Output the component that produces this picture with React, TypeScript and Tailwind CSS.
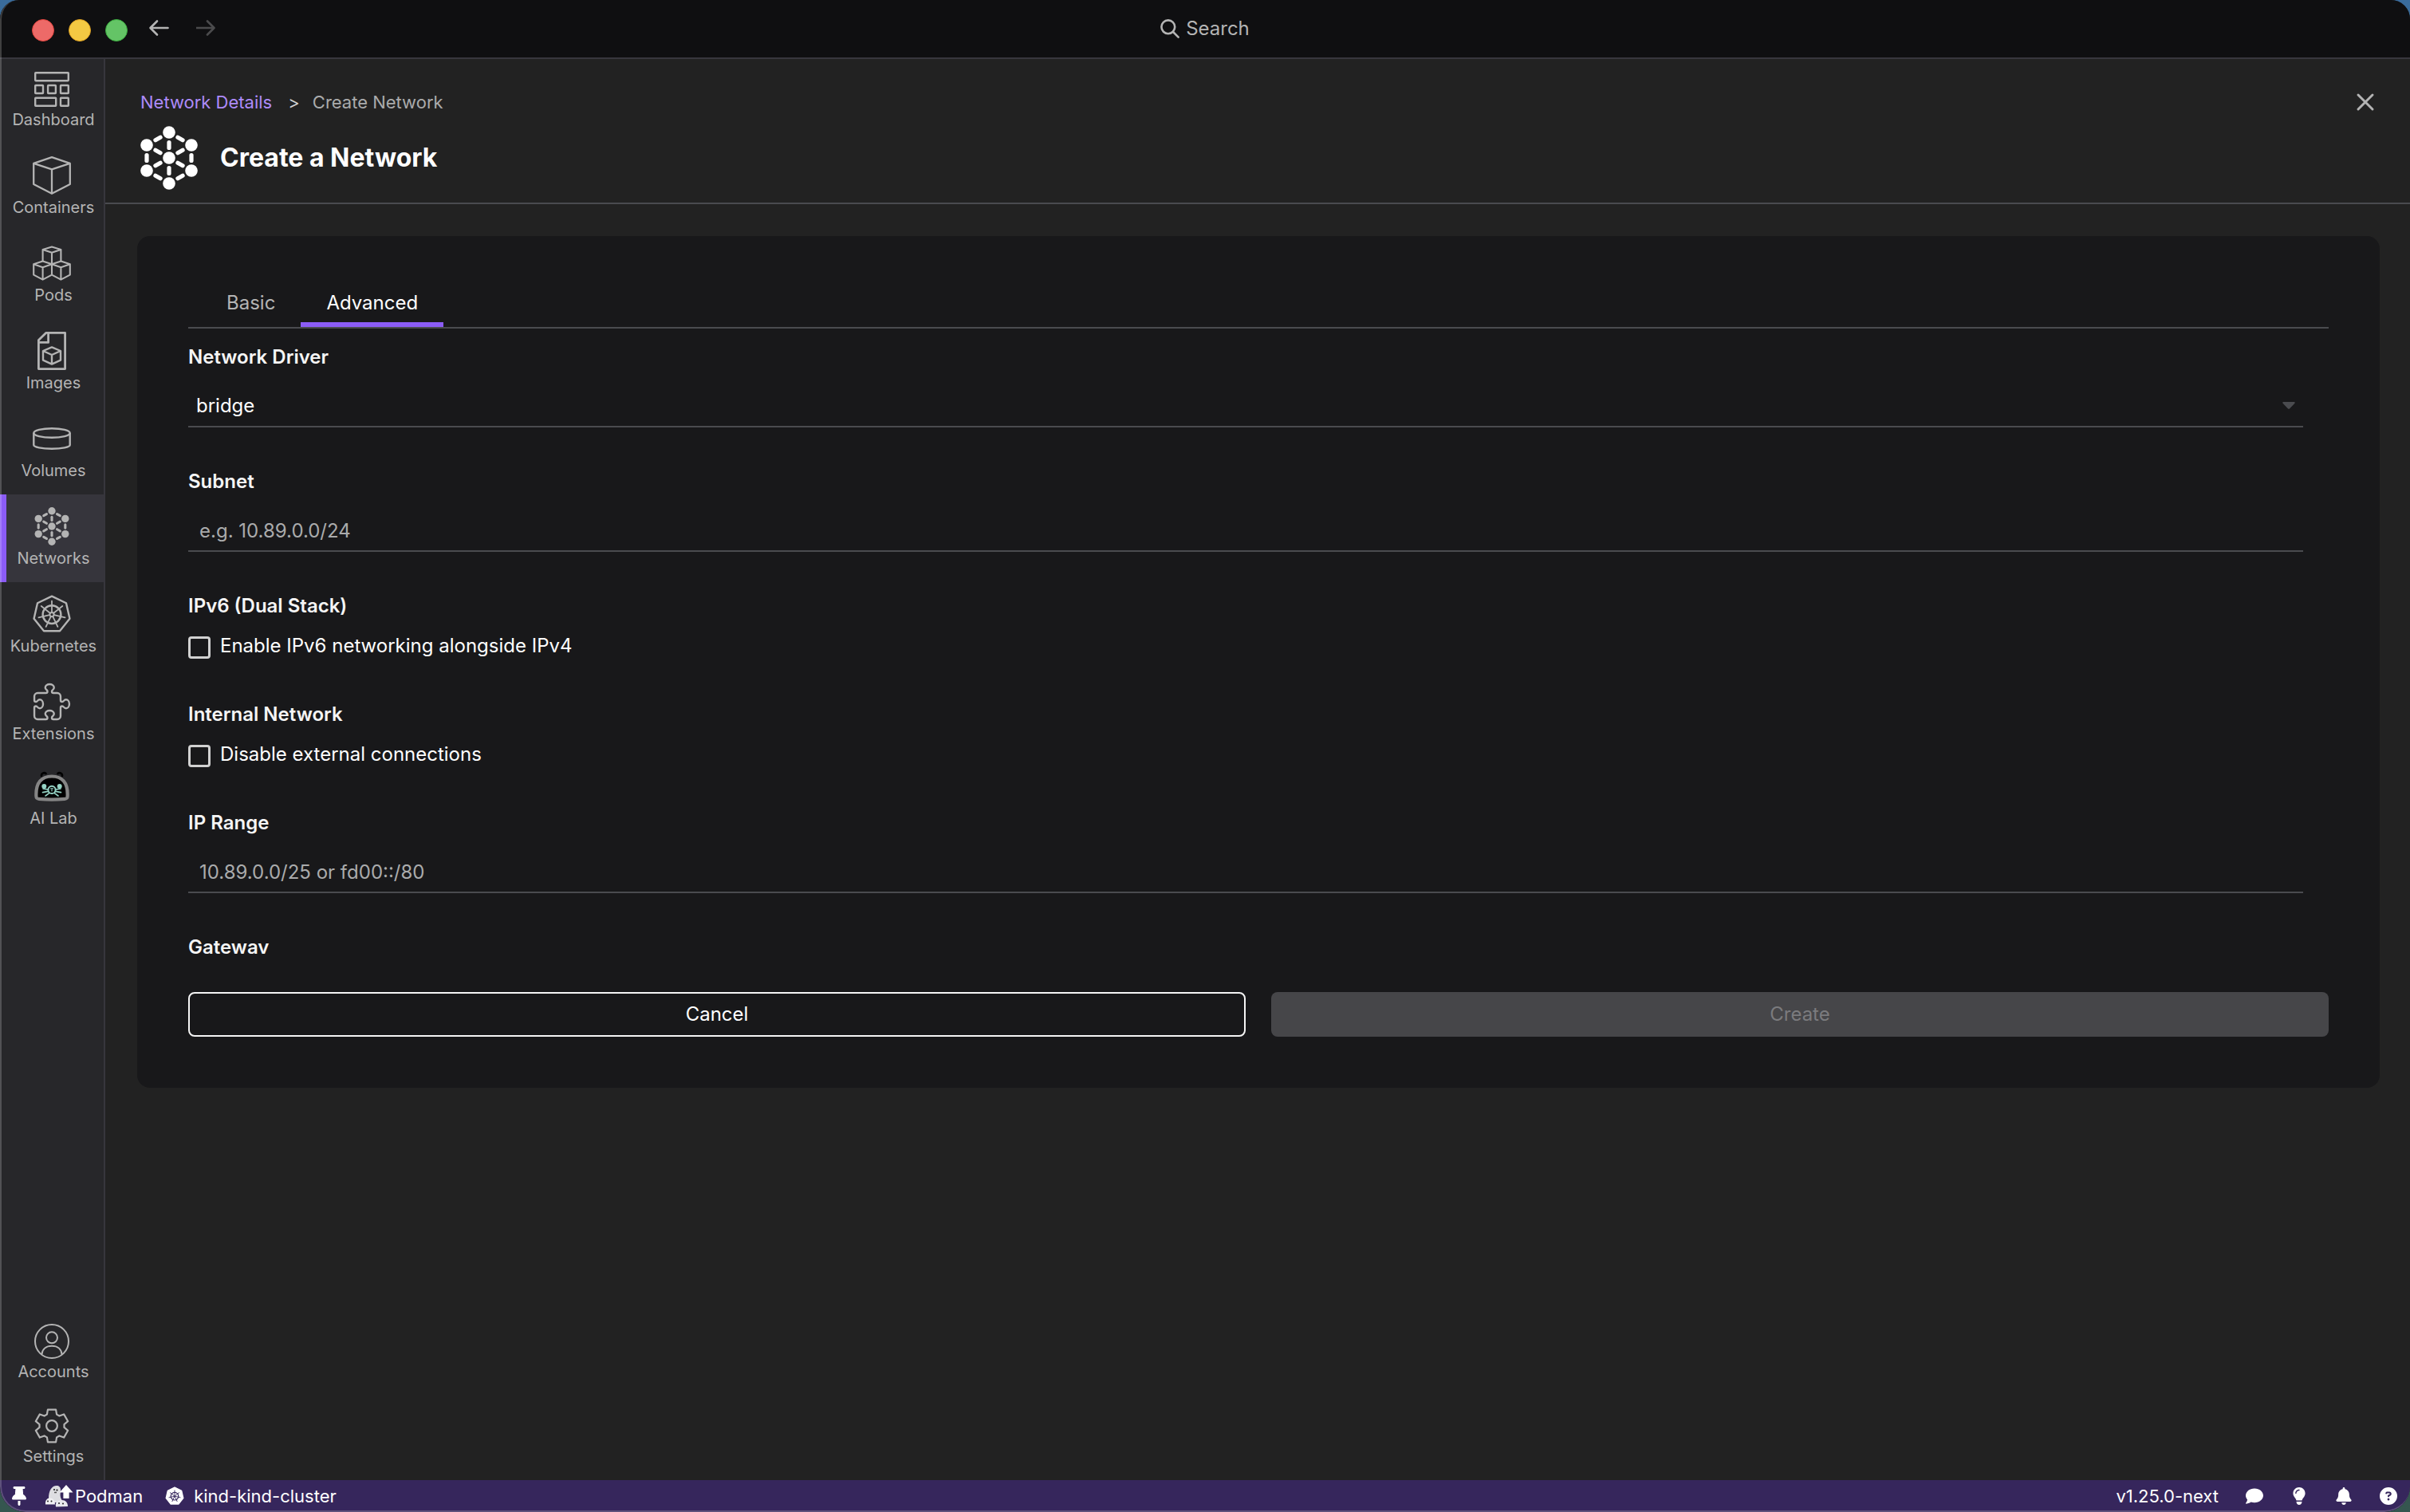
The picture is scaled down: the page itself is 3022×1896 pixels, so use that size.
import type { ReactNode } from "react";
import { FaBell, FaCircleQuestion, FaComment, FaLightbulb, FaThumbtack } from "react-icons/fa6";

type IconProps = {
  className?: string;
};

const polar = (cx: number, cy: number, r: number, deg: number) => {
  const a = (deg * Math.PI) / 180;
  return [cx + r * Math.sin(a), cy - r * Math.cos(a)];
};

const ring = (cx: number, cy: number, r: number, count: number) =>
  Array.from({ length: count }, (_, i) => polar(cx, cy, r, (360 / count) * i));

const NODES = [
  [40, 8],
  [68, 24],
  [68, 56],
  [40, 72],
  [12, 56],
  [12, 24],
];

const NetworkIcon = ({ className = "" }: IconProps) => {
  const edges = NODES.flatMap((node, i) => [
    [node, NODES[(i + 1) % 6]],
    [node, [40, 40]],
  ]);
  return (
    <svg className={className} viewBox="0 0 80 80" fill="currentColor" aria-hidden="true">
      {edges.map(([a, b], i) => (
        <line
          key={i}
          x1={a[0] + (b[0] - a[0]) * 0.39}
          y1={a[1] + (b[1] - a[1]) * 0.39}
          x2={a[0] + (b[0] - a[0]) * 0.61}
          y2={a[1] + (b[1] - a[1]) * 0.61}
          stroke="currentColor"
          strokeWidth="5.2"
          strokeLinecap="round"
        />
      ))}
      {[...NODES, [40, 40]].map(([x, y]) => (
        <circle key={`${x}-${y}`} cx={x} cy={y} r="7.8" />
      ))}
    </svg>
  );
};

const DashboardIcon = ({ className = "" }: IconProps) => (
  <svg className={className} viewBox="0 0 44 44" fill="none" stroke="currentColor" strokeWidth="2.4" aria-hidden="true">
    <rect x="1.2" y="1.2" width="41.6" height="10" rx="0.6" />
    <rect x="1.2" y="17" width="9.8" height="10" rx="0.6" />
    <rect x="17.1" y="17" width="9.8" height="10" rx="0.6" />
    <rect x="33" y="17" width="9.8" height="10" rx="0.6" />
    <rect x="1.2" y="32.8" width="26" height="10" rx="0.6" />
    <rect x="33" y="32.8" width="9.8" height="10" rx="0.6" />
  </svg>
);

const ContainerIcon = ({ className = "" }: IconProps) => (
  <svg className={className} viewBox="0 0 48 48" fill="none" stroke="currentColor" strokeWidth="2.3" strokeLinejoin="round" aria-hidden="true">
    <path d="M24 1.2 46.8 8.8V35L24 46.8 1.2 35V8.8Z" />
    <path d="M1.2 8.8 24 16.4 46.8 8.8M24 16.4V46.8" />
  </svg>
);

const PodIcon = ({ className = "" }: IconProps) => (
  <svg className={className} viewBox="0 0 48 48" fill="none" stroke="currentColor" strokeWidth="2.1" strokeLinejoin="round" aria-hidden="true">
    <path d="M12.6 21V7L24 3.6 35.4 7V21M12.6 7 24 10.8 35.4 7M24 10.8V38.6" />
    <path d="M24 25.2 12.6 21.4 1.2 25.2V38.6L12.6 44.6 24 38.6M1.2 25.2 12.6 29.2 24 25.2M12.6 29.2V44.6" />
    <path d="M24 25.2 35.4 21.4 46.8 25.2V38.6L35.4 44.6 24 38.6M46.8 25.2 35.4 29.2 24 25.2M35.4 29.2V44.6" />
  </svg>
);

const ImageIcon = ({ className = "" }: IconProps) => (
  <svg className={className} viewBox="0 0 48 48" fill="none" stroke="currentColor" strokeWidth="2.8" strokeLinejoin="round" aria-hidden="true">
    <path d="M16.6 1.4H40.6V46.6H7.4V10.6Z" />
    <path d="M19.6 1.4V13.4H7.4" />
    <path strokeWidth="2.4" d="M24 19.4 35 24V35.6L24 40.6 13 35.6V24ZM13 24 24 29 35 24M24 29V40.6" />
  </svg>
);

const VolumeIcon = ({ className = "" }: IconProps) => (
  <svg className={className} viewBox="0 0 48 48" fill="none" stroke="currentColor" strokeWidth="2.4" aria-hidden="true">
    <ellipse cx="24" cy="17" rx="22.7" ry="5.8" />
    <path d="M1.3 17V32C1.3 34.6 11.4 36.8 24 36.8S46.7 34.6 46.7 32V17" />
  </svg>
);

const KubernetesIcon = ({ className = "" }: IconProps) => (
  <svg className={className} viewBox="0 0 48 48" fill="none" stroke="currentColor" aria-hidden="true">
    <polygon
      points={ring(24, 24.6, 23, 7).map((p) => p.join(",")).join(" ")}
      strokeWidth="2.4"
      strokeLinejoin="round"
    />
    <circle cx="24" cy="24.6" r="11.4" strokeWidth="2.4" />
    <circle cx="24" cy="24.6" r="2.6" strokeWidth="2" />
    {ring(24, 24.6, 17, 7).map(([x, y], i) => (
      <line key={i} x1={24 + (x - 24) * 0.17} y1={24.6 + (y - 24.6) * 0.17} x2={x} y2={y} strokeWidth="1.8" strokeLinecap="round" />
    ))}
  </svg>
);

const ExtensionIcon = ({ className = "" }: IconProps) => (
  <svg className={className} viewBox="-24 -24 560 560" fill="none" stroke="currentColor" strokeWidth="28" aria-hidden="true">
    <path d="M192 104.8c0-9.2-5.8-17.3-13.2-22.8C167.2 73.3 160 61.3 160 48c0-26.5 28.7-48 64-48s64 21.5 64 48c0 13.3-7.2 25.3-18.8 34c-7.4 5.5-13.2 13.6-13.2 22.8c0 12.8 10.4 23.2 23.2 23.2H336c26.5 0 48 21.5 48 48v56.8c0 12.8 10.4 23.2 23.2 23.2c9.2 0 17.3-5.8 22.8-13.2c8.7-11.6 20.7-18.8 34-18.8c26.5 0 48 28.7 48 64s-21.5 64-48 64c-13.3 0-25.3-7.2-34-18.8c-5.5-7.4-13.6-13.2-22.8-13.2c-12.8 0-23.2 10.4-23.2 23.2V464c0 26.5-21.5 48-48 48H279.2c-12.8 0-23.2-10.4-23.2-23.2c0-9.2 5.8-17.3 13.2-22.8c11.6-8.7 18.8-20.7 18.8-34c0-26.5-28.7-48-64-48s-64 21.5-64 48c0 13.3 7.2 25.3 18.8 34c7.4 5.5 13.2 13.6 13.2 22.8c0 12.8-10.4 23.2-23.2 23.2H48c-26.5 0-48-21.5-48-48V343.2C0 330.4 10.4 320 23.2 320c9.2 0 17.3 5.8 22.8 13.2C54.7 344.8 66.7 352 80 352c26.5 0 48-28.7 48-64s-21.5-64-48-64c-13.3 0-25.3 7.2-34 18.8C40.5 250.2 32.4 256 23.2 256C10.4 256 0 245.6 0 232.8V176c0-26.5 21.5-48 48-48H168.8c12.8 0 23.2-10.4 23.2-23.2Z" />
  </svg>
);

const AiLabIcon = ({ className = "" }: IconProps) => (
  <svg className={className} viewBox="0 0 44 44" fill="none" aria-hidden="true">
    <path d="M9 7a3.4 3.4 0 0 1 5.6-3M35 7a3.4 3.4 0 0 0-5.6-3" stroke="#000" strokeWidth="2.6" strokeLinecap="round" />
    <path d="M2.4 32.5C1.6 15 9.5 7.5 22 7.5S42.4 15 41.6 32.5C41.5 35.4 40 35.6 38 35.8 27 36.8 17 36.8 6 35.8 4 35.6 2.5 35.4 2.4 32.5Z" fill="#000" stroke="#858585" strokeWidth="4.2" />
    <g fill="#95d3c4">
      <circle cx="12.3" cy="20" r="3" />
      <circle cx="31.7" cy="20" r="3" />
    </g>
    <g stroke="#95d3c4" strokeWidth="1.6" strokeLinecap="round">
      <circle cx="22" cy="24.4" r="4.6" strokeWidth="2" />
      <path d="M17 24 11 23M17.4 26.4 10.5 27.6M18.6 28.6 14 32M27 24 33 23M26.6 26.4 33.5 27.6M25.4 28.6 30 32" />
      <path d="M20.6 22.8H23.4M22 24.4V26" strokeWidth="1.2" />
    </g>
  </svg>
);

const AccountIcon = ({ className = "" }: IconProps) => (
  <svg className={className} viewBox="0 0 44 44" fill="none" stroke="currentColor" strokeWidth="2" aria-hidden="true">
    <circle cx="22" cy="22" r="21" />
    <circle cx="22" cy="17.3" r="7" />
    <path d="M9.4 38.4C10 31.4 15 27.8 22 27.8S34 31.4 34.6 38.4" />
  </svg>
);

const SettingsIcon = ({ className = "" }: IconProps) => {
  const points = Array.from({ length: 6 }, (_, i) => i * 60).flatMap((a) => [
    polar(22, 22, 15.6, a - 23),
    polar(22, 22, 21, a - 14),
    polar(22, 22, 21, a + 14),
    polar(22, 22, 15.6, a + 23),
  ]);
  return (
    <svg className={className} viewBox="0 0 44 44" fill="none" stroke="currentColor" strokeWidth="2.2" strokeLinejoin="round" aria-hidden="true">
      <polygon points={points.map((p) => p.join(",")).join(" ")} />
      <circle cx="22" cy="22" r="6.9" />
    </svg>
  );
};

const PodmanIcon = ({ className = "" }: IconProps) => (
  <svg className={className} viewBox="0 0 36 30" aria-hidden="true">
    <path d="M5 18C5 8 9 2 15 2c3 0 5 2 5 5 0 4-1 6 0 10l3 6H9Z" fill="#dedee2" />
    <path d="M1 25.500c-.6-5 2-8 5.500-8S13 20 13 25.500Z" fill="#f0f0f2" />
    <path d="M14 28.500c-1-5 1.500-8.500 7-8.500s8 3.500 8 8Z" fill="#e8e8ec" />
    <circle cx="12" cy="7" r="1.1" fill="#222" />
    <circle cx="15.5" cy="7.6" r="1.1" fill="#222" />
    <path d="M12 10.5H15" stroke="#555" strokeWidth="1.4" />
    <circle cx="4" cy="21.5" r="1" fill="#222" />
    <circle cx="8.5" cy="21.5" r="1" fill="#222" />
    <circle cx="18" cy="24" r="1" fill="#222" />
    <circle cx="23" cy="24.5" r="1" fill="#222" />
    <path d="M27 1 35.5 10.5H30.6V18H23.4V10.5H18.5Z" fill="#fff" />
  </svg>
);

const ClusterIcon = ({ className = "" }: IconProps) => (
  <svg className={className} viewBox="0 0 24 24" fill="none" aria-hidden="true">
    <polygon points={ring(12, 12.2, 11, 7).map((p) => p.join(",")).join(" ")} fill="#fff" stroke="#fff" strokeWidth="1.5" strokeLinejoin="round" />
    <g stroke="#36265c" strokeWidth="1.2">
      <circle cx="12" cy="12.2" r="4.8" />
      {ring(12, 12.2, 7.6, 7).map(([x, y], i) => (
        <line key={i} x1="12" y1="12.2" x2={x} y2={y} strokeWidth="0.9" />
      ))}
    </g>
  </svg>
);

type NavItemProps = {
  label: string;
  icon: ReactNode;
  active?: boolean;
};

const NavItem = ({ label, icon, active = false }: NavItemProps) => (
  <a
    href="#"
    aria-current={active ? "page" : undefined}
    className={`flex flex-col items-center border-l-8 pt-4 pr-2 pb-4 text-[#b4b4b4] ${
      active ? "border-[#8b5cf6] bg-[#36353c]" : "border-transparent"
    }`}
  >
    {icon}
    <span className="pt-0.5 pl-1 text-xl leading-7">{label}</span>
  </a>
);

type FieldProps = {
  id: string;
  label: string;
  placeholder: string;
};

const TextField = ({ id, label, placeholder }: FieldProps) => (
  <div className="flex shrink-0 flex-col gap-3">
    <label htmlFor={id} className="text-2xl leading-10 font-semibold text-[#f5f5f5]">
      {label}
    </label>
    <input
      id={id}
      type="text"
      placeholder={placeholder}
      className="h-14 w-full border-b-2 border-[#4a4b4f] bg-transparent px-3.5 pt-1 text-2xl text-white placeholder:text-[#aaabac]"
    />
  </div>
);

const CheckField = ({ id, label, text }: { id: string; label: string; text: string }) => (
  <fieldset className="flex shrink-0 flex-col">
    <legend className="mb-3 text-2xl leading-10 font-semibold text-[#f5f5f5]">{label}</legend>
    <label htmlFor={id} className="flex items-start gap-3 text-2xl leading-9 text-white">
      <input
        id={id}
        type="checkbox"
        className="mt-1.5 size-7 appearance-none rounded border-3 border-[#d1d1d1]"
      />
      {text}
    </label>
  </fieldset>
);

const TitleBar = () => (
  <header className="grid h-[74px] shrink-0 grid-cols-[1fr_auto_1fr] items-center border-b-2 border-[#37363d] bg-[#0f0f11] text-[#b4b4b4]">
    <div className="flex items-center pl-10">
      <div className="flex gap-[18px] pt-1">
        <span className="size-7 rounded-full border border-[#e0443e] bg-[#ed6a68]" />
        <span className="size-7 rounded-full border border-[#dea123] bg-[#f4c943]" />
        <span className="size-7 rounded-full border border-[#3bab3f] bg-[#64c466]" />
      </div>
      <button type="button" aria-label="Back" className="ml-[26px] pb-0.5">
        <svg className="h-6 w-7" viewBox="0 0 28 24" fill="none" stroke="currentColor" strokeWidth="2.6" strokeLinecap="round" strokeLinejoin="round">
          <path d="M24.5 12H3M11 3.5 2.5 12l8.5 8.5" />
        </svg>
      </button>
      <button type="button" aria-label="Forward" className="ml-8 pb-0.5 text-[#4b4b4d]" disabled>
        <svg className="h-6 w-7" viewBox="0 0 28 24" fill="none" stroke="currentColor" strokeWidth="2.6" strokeLinecap="round" strokeLinejoin="round">
          <path d="M.5 12H22M14 3.5 22.5 12 14 20.5" />
        </svg>
      </button>
    </div>
    <button type="button" className="flex items-center gap-2 text-2xl leading-8">
      <svg className="size-6" viewBox="0 0 24 24" fill="none" stroke="currentColor" strokeWidth="2.6" strokeLinecap="round" aria-hidden="true">
        <circle cx="9.8" cy="9.8" r="8.4" />
        <path d="M16 16 22.6 22.6" />
      </svg>
      Search
    </button>
    <div />
  </header>
);

const Sidebar = () => (
  <nav className="flex w-[132px] shrink-0 flex-col border-r-2 border-[#37363d] bg-[#27272a]">
    <NavItem label="Dashboard" icon={<DashboardIcon className="size-11" />} />
    <NavItem label="Containers" icon={<ContainerIcon className="size-12" />} />
    <NavItem label="Pods" icon={<PodIcon className="size-12" />} />
    <NavItem label="Images" icon={<ImageIcon className="size-12" />} />
    <NavItem label="Volumes" icon={<VolumeIcon className="size-12" />} />
    <NavItem label="Networks" icon={<NetworkIcon className="size-12" />} active />
    <NavItem label="Kubernetes" icon={<KubernetesIcon className="size-12" />} />
    <NavItem label="Extensions" icon={<ExtensionIcon className="size-12" />} />
    <NavItem label="AI Lab" icon={<AiLabIcon className="size-11" />} />
    <div className="grow" />
    <NavItem label="Accounts" icon={<AccountIcon className="size-11" />} />
    <NavItem label="Settings" icon={<SettingsIcon className="size-11" />} />
  </nav>
);

const PageHeader = () => (
  <div className="flex items-start justify-between border-b-2 border-[#4a4b4f] pt-9 pr-11 pb-4 pl-10">
    <div>
      <nav aria-label="Breadcrumb" className="flex items-center gap-4 pl-1 text-[22px] leading-9 text-[#aaabac]">
        <a href="#" className="pr-1 text-[#ad8bfa]">
          Network Details
        </a>
        <span className="text-[#d1d1d1]">&gt;</span>
        <span>Create Network</span>
      </nav>
      <div className="mt-3 flex items-center gap-6">
        <NetworkIcon className="size-20 text-white" />
        <h1 className="text-[32px] leading-10 font-bold text-white">Create a Network</h1>
      </div>
    </div>
    <button type="button" aria-label="Close" className="text-[#b4b4b4]">
      <svg className="my-1.5 size-6" viewBox="0 0 24 24" fill="none" stroke="currentColor" strokeWidth="3" strokeLinecap="round">
        <path d="M3 3 21 21M21 3 3 21" />
      </svg>
    </button>
  </div>
);

const NetworkForm = () => (
  <form className="mt-10 mr-[38px] ml-10 flex flex-col rounded-2xl bg-[#18181a] px-16 pt-14 pb-16">
    <div role="tablist" className="flex border-b-2 border-[#4a4b4f] pl-4 text-2xl leading-9">
      <button type="button" role="tab" aria-selected="false" className="border-b-6 border-transparent px-8 pt-2.5 pb-1.5 text-[#b4b4b4]">
        Basic
      </button>
      <button type="button" role="tab" aria-selected="true" className="border-b-6 border-[#8b5cf6] px-8 pt-2.5 pb-1.5 text-white">
        Advanced
      </button>
    </div>
    <div className="flex h-[784px] flex-col gap-12 overflow-hidden pt-4 pr-8">
      <div className="flex shrink-0 flex-col gap-3">
        <label htmlFor="driver" className="text-2xl leading-10 font-semibold text-[#f5f5f5]">
          Network Driver
        </label>
        <div className="relative">
          <select
            id="driver"
            defaultValue="bridge"
            className="h-14 w-full appearance-none border-b-2 border-[#4a4b4f] bg-transparent px-2.5 pt-1 text-2xl text-white"
          >
            <option>bridge</option>
          </select>
          <svg className="pointer-events-none absolute top-6 right-2.5 h-2.5 w-4" viewBox="0 0 16 10" fill="#4a4b4f">
            <path d="M1.5 0h13c1.300 0 1.500 1.200.700 2L9.200 8.300c-.700.700-1.700.700-2.400 0L.800 2C0 1.200.200 0 1.500 0Z" />
          </svg>
        </div>
      </div>
      <TextField id="subnet" label="Subnet" placeholder="e.g. 10.89.0.0/24" />
      <CheckField id="ipv6" label="IPv6 (Dual Stack)" text="Enable IPv6 networking alongside IPv4" />
      <CheckField id="internal" label="Internal Network" text="Disable external connections" />
      <TextField id="range" label="IP Range" placeholder="10.89.0.0/25 or fd00::/80" />
      <TextField id="gateway" label="Gateway" placeholder="" />
    </div>
    <div className="mt-12 grid grid-cols-2 gap-8 text-2xl">
      <button type="button" className="h-14 rounded-lg border-2 border-[#f5f5f5] text-white">
        Cancel
      </button>
      <button type="submit" disabled className="h-14 rounded-lg bg-[#464649] text-[#7b7b7e]">
        Create
      </button>
    </div>
  </form>
);

const StatusBar = () => (
  <footer className="flex h-10 shrink-0 items-center justify-between bg-[#36265c] pr-4 pl-3 text-[22px] leading-9 text-white">
    <div className="flex items-center">
      <button type="button" aria-label="Pin">
        <FaThumbtack className="h-6 w-6" />
      </button>
      <button type="button" className="ml-5 flex items-center gap-0.5">
        <PodmanIcon className="h-[30px] w-9" />
        Podman
      </button>
      <button type="button" className="ml-7 flex items-center gap-3">
        <ClusterIcon className="size-6" />
        kind-kind-cluster
      </button>
    </div>
    <div className="flex items-center gap-[34px]">
      <span>v1.25.0-next</span>
      <button type="button" aria-label="Feedback">
        <FaComment className="size-[22px]" />
      </button>
      <button type="button" aria-label="Tips">
        <FaLightbulb className="size-[22px]" />
      </button>
      <button type="button" aria-label="Notifications">
        <FaBell className="size-[22px]" />
      </button>
      <button type="button" aria-label="Help">
        <FaCircleQuestion className="size-[22px]" />
      </button>
    </div>
  </footer>
);

const App = () => (
  <div className="h-screen bg-linear-to-b from-[#3a6c9c] to-[#35564f] font-['Inter',sans-serif]">
    <div className="relative flex h-full flex-col overflow-hidden rounded-t-3xl rounded-b-[32px] bg-[#222222]">
      <TitleBar />
      <div className="flex min-h-0 flex-1">
        <Sidebar />
        <main className="min-w-0 flex-1">
          <PageHeader />
          <NetworkForm />
        </main>
      </div>
      <StatusBar />
      <div className="pointer-events-none absolute inset-0 rounded-t-3xl rounded-b-[32px] border-b-2 border-l-2 border-white/20" />
    </div>
  </div>
);

export default App;
